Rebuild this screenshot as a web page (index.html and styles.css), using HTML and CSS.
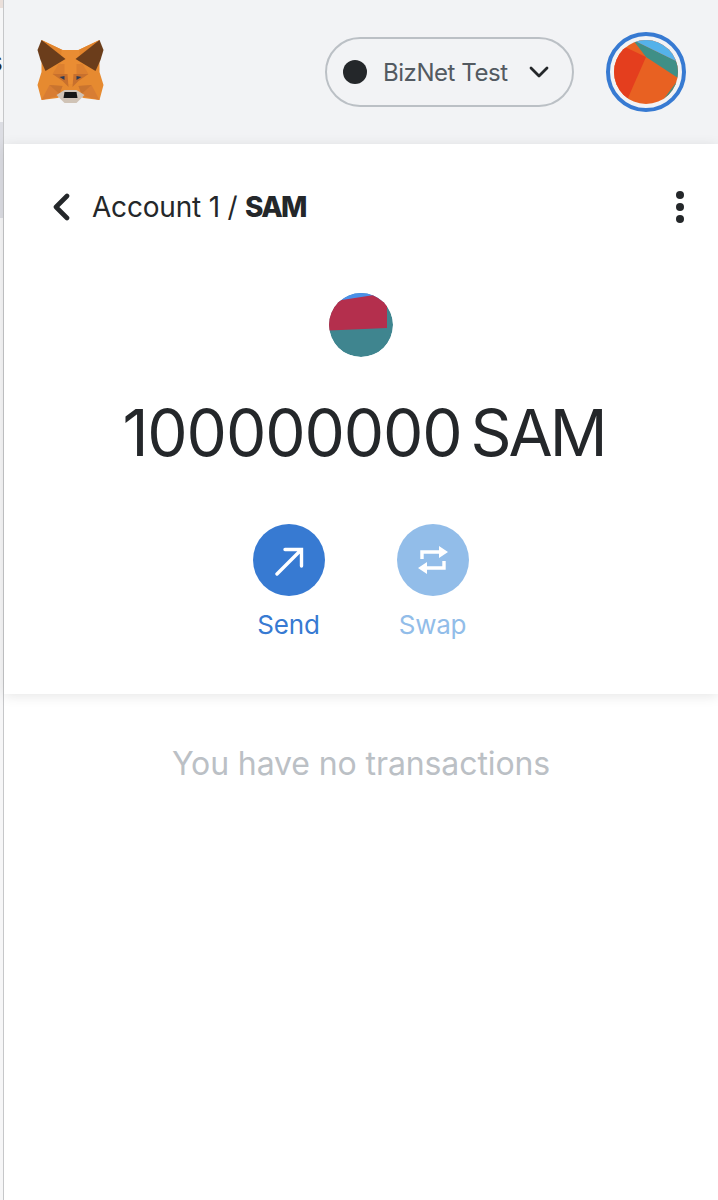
FILE: index.html
```html
<!DOCTYPE html>
<html lang="en">
<head>
<meta charset="utf-8">
<title>MetaMask</title>
<link rel="stylesheet" href="styles.css">
</head>
<body>
<div class="edge">
  <div class="edge-top"></div>
  <div class="edge-plain"><span class="edge-letter">s</span></div>
  <div class="edge-band"></div>
  <div class="edge-rest"></div>
</div>
<div class="app">
  <header class="topbar">
    <svg class="fox" viewBox="0 0 66 64" aria-label="MetaMask">
      <polygon fill="#e68a30" points="4,0 25,10 41,10 62,0 62,32 66,45 62,60 46,58 40,55 26,55 20,58 4,60 0,45 4,32"/>
      <polygon fill="#e2842c" points="4,0 25,10 28,19"/>
      <polygon fill="#e2842c" points="62,0 41,10 38,19"/>
      <polygon fill="#ea8d33" points="24,10 42,10 43,32 37,44 29,44 23,32"/>
      <polygon fill="#dc8030" points="21,24 27,24 27,34 15,34"/>
      <polygon fill="#dc8030" points="45,24 39,24 39,34 51,34"/>
      <polygon fill="#c8702d" points="15,34 30,34 31,47 25,41"/>
      <polygon fill="#c8702d" points="51,34 36,34 35,47 41,41"/>
      <polygon fill="#6b3d1b" points="4,0 28,19 8,31 3,20 0,10"/>
      <polygon fill="#6b3d1b" points="62,0 38,19 58,31 63,20 66,10"/>
      <polygon fill="#d87d33" points="12,45 25,46 21,56 4,60"/>
      <polygon fill="#d87d33" points="54,45 41,46 45,56 62,60"/>
      <polygon fill="#c9742f" points="12,45 25,46 22,54"/>
      <polygon fill="#c9742f" points="54,45 41,46 44,54"/>
      <polygon fill="#d0c3b6" points="19,55 27,50 39,50 47,55 39,63 27,63"/>
      <polygon fill="#161616" points="27,52 39,52 40,58 26,58"/>
      <polygon fill="#2b3a56" points="22,37 27,36 27,40"/>
      <polygon fill="#2b3a56" points="44,37 39,36 39,40"/>
    </svg>
    <div class="top-actions">
      <button class="network" type="button">
        <span class="net-dot"></span>
        <span class="net-name">BizNet Test</span>
        <svg class="chevron" viewBox="0 0 20 12"><path d="M2 2l8 8 8-8" fill="none" stroke="#24272a" stroke-width="2.8" stroke-linecap="round" stroke-linejoin="round"/></svg>
      </button>
      <div class="account-ring">
        <svg class="identicon" viewBox="0 0 64 64">
          <rect width="64" height="64" fill="#e86122"/>
          <polygon fill="#3f8f86" points="19,0 64,22 64,38 32,17"/>
          <polygon fill="#55b2ea" points="19,0 64,0 64,22"/>
          <polygon fill="#3f8f86" points="64,40 64,64 46,64"/>
          <polygon fill="#e43e1e" points="0,3 11,7 32,17 14,58 0,58"/>
        </svg>
      </div>
    </div>
  </header>
  <main>
    <section class="asset-card">
      <nav class="crumbs">
        <div class="crumb-left">
          <svg class="back" viewBox="0 0 18 28"><path d="M15 3L4 14l11 11" fill="none" stroke="#24272a" stroke-width="4.6" stroke-linecap="round" stroke-linejoin="round"/></svg>
          <span class="crumb-text">Account 1 / <b>SAM</b></span>
        </div>
        <span class="kebab"><i></i><i></i><i></i></span>
      </nav>
      <svg class="token-icon" viewBox="0 0 64 64">
        <circle cx="32" cy="32" r="32" fill="#3f858f"/>
        <polygon fill="#4a90e8" points="0,-1 64,-1 64,8 0,9"/>
        <path fill="#b42f4d" d="M0 37.500 L0 9 L58 0 L58 35 Z"/>
      </svg>
      <h1 class="balance"><span class="amount">100000000</span> <span class="symbol">SAM</span></h1>
      <div class="actions">
        <div class="action">
          <span class="round send">
            <svg viewBox="0 0 32 32" class="round-icon"><path d="M4 30L27 7M12 5.500h16.500V22" fill="none" stroke="#fff" stroke-width="3.4" stroke-linecap="round"/></svg>
          </span>
          <span class="label send-label">Send</span>
        </div>
        <div class="action">
          <span class="round swap">
            <svg viewBox="0 0 32 32" class="round-icon"><path d="M5 15V8h18M27 17v7H9" fill="none" stroke="#fff" stroke-width="3.4"/><path d="M22 2l9 6-9 6zM10 18l-9 6 9 6z" fill="#fff"/></svg>
          </span>
          <span class="label swap-label">Swap</span>
        </div>
      </div>
    </section>
    <p class="empty">You have no transactions</p>
  </main>
</div>
</body>
</html>
```
FILE: styles.css
```css
* { box-sizing: border-box; }
html, body { margin: 0; height: 100%; }
body {
  display: flex;
  background: #fff;
  font-family: Inter, "Liberation Sans", sans-serif;
  color: #24272a;
  overflow: hidden;
}
.edge {
  width: 4px;
  flex: none;
  display: flex;
  flex-direction: column;
  border-right: 1px solid #c6c7c9;
  overflow: hidden;
}
.edge-top { height: 8px; background: #eadfda; }
.edge-plain { height: 114px; background: #f6f6f7; overflow: hidden; display: flex; }
.edge-letter { font-size: 26px; line-height: 1; margin-top: 41px; margin-left: -11px; color: #24272a; flex: none; width: 15px; }
.edge-band { height: 96px; background: #dcdde3; }
.edge-rest { flex: 1; background: #f6f6f7; }
.app { flex: 1; min-width: 0; display: flex; flex-direction: column; }
.topbar {
  height: 144px;
  background: #f2f3f5;
  display: flex;
  align-items: center;
  justify-content: space-between;
  padding: 0 32px 0 33px;
}
.fox { width: 67px; height: 64px; }
.top-actions { display: flex; align-items: center; gap: 32px; }
.network {
  width: 249px;
  height: 70px;
  border: 2px solid #bbc0c5;
  border-radius: 35px;
  background: transparent;
  display: flex;
  align-items: center;
  padding: 0 0 0 16px;
  font: inherit;
}
.net-dot { width: 24px; height: 24px; border-radius: 50%; background: #24272a; flex: none; }
.net-name { margin-left: 16px; font-size: 24px; letter-spacing: -0.45px; color: #535a61; white-space: nowrap; }
.chevron { width: 20px; height: 12px; margin-left: 21px; flex: none; }
.account-ring {
  width: 80px;
  height: 80px;
  border-radius: 50%;
  border: 4px solid #377ad2;
  padding: 4px;
}
.identicon { display: block; width: 64px; height: 64px; border-radius: 50%; }
.asset-card {
  height: 550px;
  background: #fff;
  box-shadow: 0 2px 12px rgba(0,0,0,.1);
  display: flex;
  flex-direction: column;
  align-items: center;
}
.crumbs {
  align-self: stretch;
  display: flex;
  align-items: center;
  justify-content: space-between;
  height: 64px;
  margin-top: 31px;
  padding: 0 34px 0 48px;
}
.crumb-left { display: flex; align-items: center; gap: 22px; }
.back { width: 18px; height: 28px; }
.crumb-text { font-size: 28px; letter-spacing: -0.2px; color: #24272a; white-space: nowrap; }
.crumb-text b { font-weight: 800; letter-spacing: -1.8px; }
.kebab { display: flex; flex-direction: column; gap: 4px; }
.kebab i { width: 8px; height: 8px; border-radius: 50%; background: #24272a; display: block; }
.token-icon { width: 64px; height: 64px; margin-top: 54px; overflow: hidden; border-radius: 50%; flex: none; }
.balance { margin: 38px 0 0 5px; font-size: 64px; line-height: 76px; word-spacing: -9px; font-weight: 400; color: #24272a; white-space: nowrap; }
.amount { letter-spacing: -1.1px; }
.symbol { letter-spacing: -3px; }
.actions { display: flex; gap: 72px; margin-top: 53px; margin-left: -1px; }
.action { width: 72px; display: flex; flex-direction: column; align-items: center; }
.round { width: 72px; height: 72px; border-radius: 50%; display: flex; align-items: center; justify-content: center; }
.send { background: #377ad2; }
.swap { background: #92bde9; }
.round-icon { width: 32px; height: 32px; }
.label { margin-top: 9px; font-size: 26px; letter-spacing: -0.2px; line-height: 40px; white-space: nowrap; }
.send-label { color: #377ad2; }
.swap-label { color: #92bde9; }
.empty { margin: 50px 0 0; text-align: center; font-size: 32px; letter-spacing: -0.1px; line-height: 40px; color: #bbc0c5; }
```
